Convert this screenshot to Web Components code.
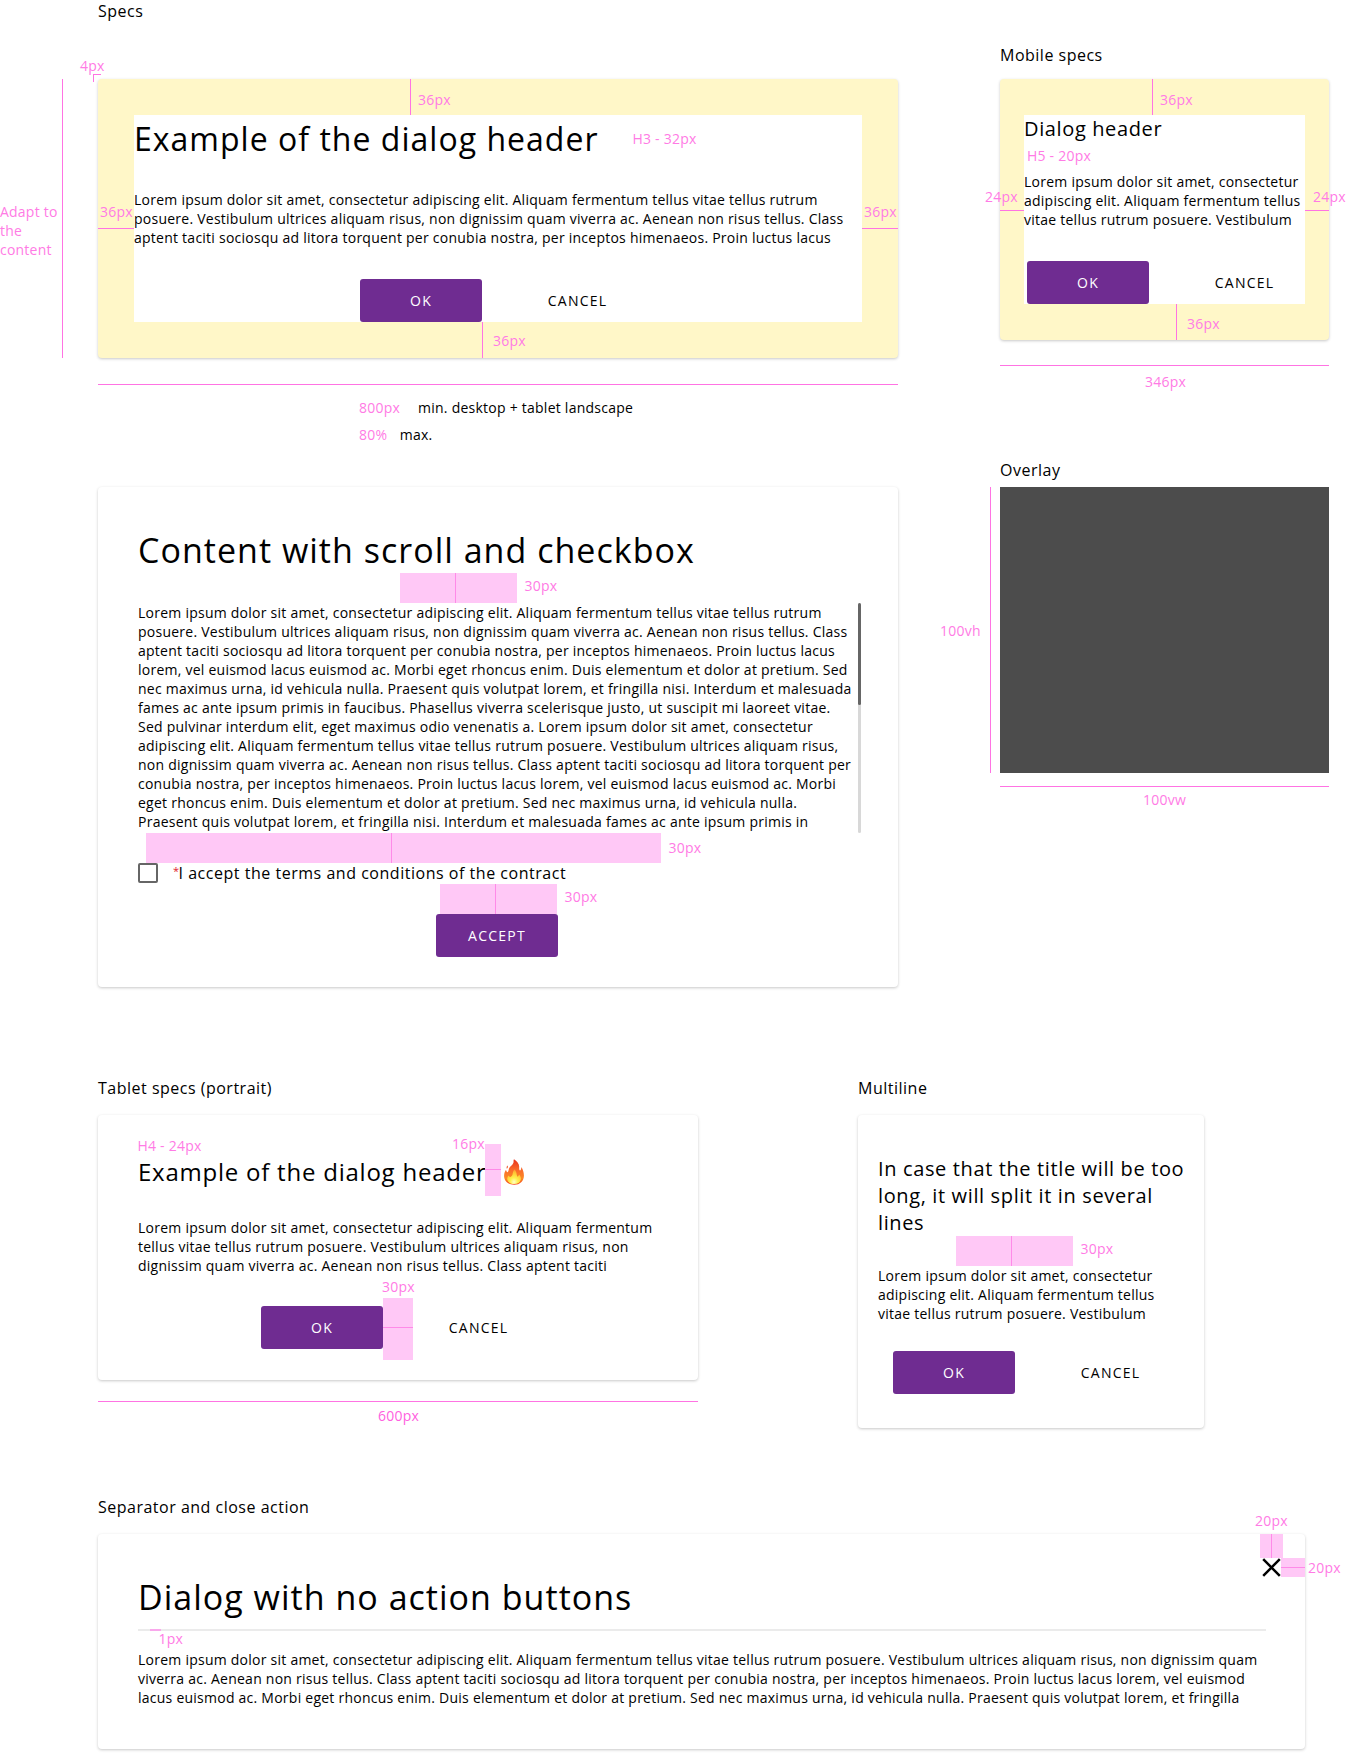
<!DOCTYPE html>
<html lang="en">
<head>
<meta charset="utf-8">
<title>Dialog specs</title>
<style>
html, body { margin: 0; background: #fff; }
body { font-family: "Open Sans", "Noto Sans", sans-serif; color: #000; }
</style>
</head>
<body>
<dialog-specs></dialog-specs>

<template id="t-section">
<style>
:host { display: block; }
h2 { margin: 0 0 var(--title-gap, 16px); font: 400 16px/22px "Open Sans", sans-serif; letter-spacing: .5px; white-space: nowrap; }
</style>
<h2></h2><slot></slot>
</template>

<template id="t-card">
<style>
:host { display: flex; flex-direction: column; position: relative; box-sizing: border-box; background: #fff; border-radius: 4px; box-shadow: 0 1px 3px rgba(0,0,0,.22); }
:host([padded]) { padding: 36px var(--side, 36px); background: #fff7c8; }
:host([padded]) .body { background: #fff; }
.body { display: flex; flex-direction: column; }
</style>
<div class="body"><slot></slot></div><slot name="notes"></slot>
</template>

<template id="t-button">
<style>
:host { display: flex; align-items: center; justify-content: center; box-sizing: border-box; width: 122px; height: 43px; border-radius: 3px; font: 14px/19px "Open Sans", sans-serif; letter-spacing: 1.23px; }
:host([primary]) { background: #6f2c91; color: #fff; }
:host(:not([primary])) { padding-left: 9px; }
</style>
<span><slot></slot></span>
</template>

<template id="t-title">
<style>
:host { display: block; white-space: nowrap; font-size: 32px; line-height: 47px; letter-spacing: 1.02px; }
:host([size="34"]) { font-size: 34px; line-height: 46px; }
:host([size="24"]) { font-size: 24px; line-height: 33px; letter-spacing: .77px; }
:host([size="20"]) { font-size: 20px; line-height: 27px; letter-spacing: .63px; }
</style>
<slot></slot>
</template>

<template id="t-copy">
<style>:host { display: block; white-space: nowrap; font-size: 14px; line-height: 19px; letter-spacing: .245px; }</style>
<slot></slot>
</template>

<template id="t-note">
<style>
:host { display: block; white-space: nowrap; font-size: 14px; line-height: 19px; letter-spacing: .22px; color: #ff7be5; }
:host([over]) { position: absolute; }
</style>
<slot></slot>
</template>

<template id="t-line">
<style>
:host { display: block; background: #ff73e3; width: 1px; height: 1px; }
:host([over]) { position: absolute; }
</style>
</template>

<template id="t-gap">
<style>
:host { display: flex; height: 30px; column-gap: 7.5px; }
.band { width: var(--w, 117px); background: #ffc8f6; display: flex; }
.band i { width: 1px; margin-left: var(--tick, 55px); background: #ff8ae8; }
spec-note { margin-top: var(--drop, 3px); }
</style>
<div class="band"><i></i></div><spec-note><slot></slot></spec-note>
</template>

<template id="t-band">
<style>
:host { position: absolute; display: flex; align-items: center; justify-content: center; background: #ffc8f6; }
i { background: #ff8ae8; width: 1px; height: 100%; }
:host([across]) i { width: 100%; height: 1px; }
</style>
<i></i>
</template>

<template id="t-scroll">
<style>
:host { display: flex; height: 230px; overflow: hidden; }
.text { width: 720px; }
.track { width: 3px; border-radius: 2px; background: #d8d8d8; }
.thumb { height: 102px; border-radius: 2px; background: #666; }
</style>
<div class="text"><slot></slot></div><div class="track"><div class="thumb"></div></div>
</template>

<template id="t-check">
<style>
:host { display: flex; height: 21px; font-size: 16px; line-height: 22px; letter-spacing: .525px; white-space: nowrap; }
.box { box-sizing: border-box; width: 20px; height: 20px; margin: 0 15px 0 0; border: 2px solid #666; border-radius: 2px; }
sup { color: #e0202c; font-size: 11px; line-height: 15px; width: 5.500px; letter-spacing: 0; vertical-align: baseline; }
.label { margin-top: -1px; }
</style>
<div class="box"></div><sup>*</sup><span class="label"><slot></slot></span>
</template>

<template id="t-fire">
<style>:host { display: block; width: 20px; height: 26px; } svg { display: block; }</style>
<svg width="20" height="26" viewBox="0 0 20 26">
<defs>
<linearGradient id="a" x1="0" y1="0" x2="0" y2="1"><stop offset="0" stop-color="#e8301c"/><stop offset=".4" stop-color="#f9692a"/><stop offset=".75" stop-color="#fb8a24"/><stop offset="1" stop-color="#f5401c"/></linearGradient>
<radialGradient id="b" cx=".5" cy=".85" r=".8"><stop offset="0" stop-color="#ffffc8"/><stop offset=".35" stop-color="#fff04e"/><stop offset=".75" stop-color="#ffc936"/><stop offset="1" stop-color="#fda331"/></radialGradient>
</defs>
<path fill="url(#a)" d="M10 .3C13 2 15.5 5 15.2 8.200C15.100 9.500 15.200 11 15.900 11.600C17 11 17.400 9.400 17.200 8C19 10.500 20 13.500 19.900 17C19.800 22 16 25.800 10.200 25.800C4.200 25.800 .2 22 .1 17.300C0 14.300 1 12.500 2 10.800C2.200 12 2.700 13 3.600 13.300C4.600 12.500 4.500 11.200 5 9.500C5.600 7.500 9 6 9.500 3.500C9.700 2.300 9.300 1.200 10 .3Z"/>
<path fill="#ed5424" d="M3.500 6.500C4.200 7.600 3.900 8.900 2.900 9.800C2.300 8.700 2.600 7.500 3.500 6.500Z"/>
<path fill="url(#b)" d="M10.500 10.500C12.600 12.300 12.500 15.200 13.200 17.500C14.200 17.500 14.800 16.400 15 15.400C16.500 17 17.200 18.700 16.800 20.800C16.200 23.600 13.700 25.100 10.300 25.100C6.500 25.100 3.500 23.200 3.200 20.300C3.100 18.500 3.800 17.200 4.500 16.400C5 17.300 5.600 17.900 6.500 17.900C8 17.300 8.600 15.700 8.700 14.500C8.900 13 9.500 11.500 10.500 10.500Z"/>
</svg>
</template>

<template id="t-close">
<style>:host { display: block; position: absolute; width: 19px; height: 19px; } svg { display: block; }</style>
<svg width="19" height="19" viewBox="0 0 19 19"><path d="M1.200 1.200 17.800 17.800M17.800 1.200 1.200 17.800" fill="none" stroke="#000" stroke-width="2.500"/></svg>
</template>

<template id="t-page">
<style>
:host { display: flex; flex-direction: column; box-sizing: border-box; width: 1346px; height: 1755px; padding-left: 98px; overflow: hidden; }
.row { display: flex; align-items: flex-start; }
.top { height: 987px; }
.left { width: 800px; margin-right: 102px; }
.right { width: 329px; padding-top: 44px; }
.second { height: 351px; margin: 90px 0 68px; }
.actions { display: flex; gap: 30px; }
.pair { display: flex; }
.overlay { position: relative; height: 286px; background: #4c4c4c; }
.rule { width: 1128px; height: 2px; background: #ebebeb; }
</style>
<div class="row top">
  <div class="left">
    <spec-section heading="Specs" style="--title-gap:57px">
      <spec-card padded style="height:279px">
        <spec-title>Example of the dialog header</spec-title>
        <spec-copy style="margin-top:28px">Lorem ipsum dolor sit amet, consectetur adipiscing elit. Aliquam fermentum tellus vitae tellus rutrum<br>posuere. Vestibulum ultrices aliquam risus, non dignissim quam viverra ac. Aenean non risus tellus. Class<br>aptent taciti sociosqu ad litora torquent per conubia nostra, per inceptos himenaeos. Proin luctus lacus</spec-copy>
        <div class="actions" style="margin:32px 0 0 226px"><spec-button primary>OK</spec-button><spec-button>CANCEL</spec-button></div>
        <div slot="notes">
          <spec-note over style="left:-98px;top:123px">Adapt to<br>the<br>content</spec-note>
          <spec-line over style="left:-36px;top:0;height:279px"></spec-line>
          <spec-note over style="left:-18px;top:-23px">4px</spec-note>
          <spec-line over style="left:-5px;top:-5px;height:8px"></spec-line>
          <spec-line over style="left:-5px;top:-5px;width:8px"></spec-line>
          <spec-line over style="left:312px;top:0;height:36px"></spec-line>
          <spec-note over style="left:320px;top:11px">36px</spec-note>
          <spec-note over style="left:2px;top:123px">36px</spec-note>
          <spec-line over style="left:0;top:149px;width:36px"></spec-line>
          <spec-note over style="left:766px;top:123px">36px</spec-note>
          <spec-line over style="left:764px;top:149px;width:36px"></spec-line>
          <spec-line over style="left:384px;top:243px;height:36px"></spec-line>
          <spec-note over style="left:395px;top:252px">36px</spec-note>
          <spec-note over style="left:534.500px;top:50px">H3 - 32px</spec-note>
        </div>
      </spec-card>
      <spec-line style="width:800px;margin-top:26px"></spec-line>
      <div class="pair" style="padding:13px 0 0 261px;gap:18px"><spec-note>800px</spec-note><spec-copy>min. desktop + tablet landscape</spec-copy></div>
      <div class="pair" style="padding:8px 0 0 261px;gap:12.500px"><spec-note>80%</spec-note><spec-copy>max.</spec-copy></div>
    </spec-section>
    <spec-card style="height:500px;margin-top:43px;padding:40px 37px 0 40px">
      <spec-title size="34">Content with scroll and checkbox</spec-title>
      <spec-gap style="margin-left:262px">30px</spec-gap>
      <spec-scroll><spec-copy>Lorem ipsum dolor sit amet, consectetur adipiscing elit. Aliquam fermentum tellus vitae tellus rutrum<br>posuere. Vestibulum ultrices aliquam risus, non dignissim quam viverra ac. Aenean non risus tellus. Class<br>aptent taciti sociosqu ad litora torquent per conubia nostra, per inceptos himenaeos. Proin luctus lacus<br>lorem, vel euismod lacus euismod ac. Morbi eget rhoncus enim. Duis elementum et dolor at pretium. Sed<br>nec maximus urna, id vehicula nulla. Praesent quis volutpat lorem, et fringilla nisi. Interdum et malesuada<br>fames ac ante ipsum primis in faucibus. Phasellus viverra scelerisque justo, ut suscipit mi laoreet vitae.<br>Sed pulvinar interdum elit, eget maximus odio venenatis a. Lorem ipsum dolor sit amet, consectetur<br>adipiscing elit. Aliquam fermentum tellus vitae tellus rutrum posuere. Vestibulum ultrices aliquam risus,<br>non dignissim quam viverra ac. Aenean non risus tellus. Class aptent taciti sociosqu ad litora torquent per<br>conubia nostra, per inceptos himenaeos. Proin luctus lacus lorem, vel euismod lacus euismod ac. Morbi<br>eget rhoncus enim. Duis elementum et dolor at pretium. Sed nec maximus urna, id vehicula nulla.<br>Praesent quis volutpat lorem, et fringilla nisi. Interdum et malesuada fames ac ante ipsum primis in</spec-copy></spec-scroll>
      <spec-gap style="margin-left:8px;--w:515px;--tick:245px;--drop:5px">30px</spec-gap>
      <spec-checkbox>I accept the terms and conditions of the contract</spec-checkbox>
      <spec-gap style="margin-left:302px">30px</spec-gap>
      <spec-button primary style="margin-left:298px">ACCEPT</spec-button>
    </spec-card>
  </div>
  <div class="right">
    <spec-section heading="Mobile specs" style="--title-gap:13px">
      <spec-card padded style="height:261px;--side:24px">
        <spec-title size="20">Dialog header</spec-title>
        <spec-copy style="margin-top:30px">Lorem ipsum dolor sit amet, consectetur<br>adipiscing elit. Aliquam fermentum tellus<br>vitae tellus rutrum posuere. Vestibulum</spec-copy>
        <div class="actions" style="margin:32px 0 0 3px"><spec-button primary>OK</spec-button><spec-button>CANCEL</spec-button></div>
        <div slot="notes">
          <spec-note over style="left:27px;top:67px">H5 - 20px</spec-note>
          <spec-line over style="left:152px;top:0;height:36px"></spec-line>
          <spec-note over style="left:160px;top:11px">36px</spec-note>
          <spec-note over style="left:-15px;top:108px">24px</spec-note>
          <spec-line over style="left:0;top:131px;width:24px"></spec-line>
          <spec-note over style="left:313px;top:108px">24px</spec-note>
          <spec-line over style="left:305px;top:131px;width:24px"></spec-line>
          <spec-line over style="left:176px;top:225px;height:36px"></spec-line>
          <spec-note over style="left:187px;top:235px">36px</spec-note>
        </div>
      </spec-card>
      <spec-line style="width:329px;margin-top:25px"></spec-line>
      <spec-note style="padding:6px 0 0 145px">346px</spec-note>
    </spec-section>
    <spec-section heading="Overlay" style="--title-gap:6px;margin-top:68px">
      <div class="overlay">
        <spec-line over style="left:-10px;top:0;height:286px"></spec-line>
        <spec-note over style="left:-60px;top:134px">100vh</spec-note>
      </div>
      <spec-line style="width:329px;margin-top:13px"></spec-line>
      <spec-note style="padding:3px 0 0 143px">100vw</spec-note>
    </spec-section>
  </div>
</div>
<div class="row second">
  <spec-section heading="Tablet specs (portrait)" style="width:600px;margin-right:160px">
    <spec-card style="height:265px;padding:40px 40px 0">
      <div class="pair" style="gap:17.500px;height:33px"><spec-title size="24">Example of the dialog header</spec-title><spec-fire style="margin-top:4px"></spec-fire></div>
      <spec-copy style="margin-top:30px">Lorem ipsum dolor sit amet, consectetur adipiscing elit. Aliquam fermentum<br>tellus vitae tellus rutrum posuere. Vestibulum ultrices aliquam risus, non<br>dignissim quam viverra ac. Aenean non risus tellus. Class aptent taciti</spec-copy>
      <div class="actions" style="margin:31px 0 0 123px"><spec-button primary>OK</spec-button><spec-button>CANCEL</spec-button></div>
      <div slot="notes">
        <spec-note over style="left:39.500px;top:21px">H4 - 24px</spec-note>
        <spec-note over style="left:354px;top:19px">16px</spec-note>
        <spec-band over across style="left:387px;top:29px;width:16px;height:52px;box-sizing:border-box;padding-bottom:2px"></spec-band>
        <spec-note over style="left:284px;top:162px">30px</spec-note>
        <spec-band over across style="left:285px;top:183px;width:30px;height:62px;box-sizing:border-box;padding-bottom:3px"></spec-band>
      </div>
    </spec-card>
    <spec-line style="width:600px;margin-top:21px"></spec-line>
    <spec-note style="padding:4px 0 0 280px;color:#ff5fe0">600px</spec-note>
  </spec-section>
  <spec-section heading="Multiline" style="width:346px">
    <spec-card style="height:313px;padding:40px 20px 0">
      <spec-title size="20">In case that the title will be too<br>long, it will split it in several<br>lines</spec-title>
      <spec-gap style="margin-left:78px">30px</spec-gap>
      <spec-copy>Lorem ipsum dolor sit amet, consectetur<br>adipiscing elit. Aliquam fermentum tellus<br>vitae tellus rutrum posuere. Vestibulum</spec-copy>
      <div class="actions" style="margin:28px 0 0 15px"><spec-button primary>OK</spec-button><spec-button>CANCEL</spec-button></div>
    </spec-card>
  </spec-section>
</div>
<spec-section heading="Separator and close action" style="width:1207px">
  <spec-card style="height:215px;padding:40px 39px 0 40px">
    <spec-title size="34">Dialog with no action buttons</spec-title>
    <div class="rule" style="margin:9px 0 19px"></div>
    <spec-copy>Lorem ipsum dolor sit amet, consectetur adipiscing elit. Aliquam fermentum tellus vitae tellus rutrum posuere. Vestibulum ultrices aliquam risus, non dignissim quam<br>viverra ac. Aenean non risus tellus. Class aptent taciti sociosqu ad litora torquent per conubia nostra, per inceptos himenaeos. Proin luctus lacus lorem, vel euismod<br>lacus euismod ac. Morbi eget rhoncus enim. Duis elementum et dolor at pretium. Sed nec maximus urna, id vehicula nulla. Praesent quis volutpat lorem, et fringilla</spec-copy>
    <div slot="notes">
      <spec-line over style="left:52px;top:95px;width:11px;height:2px;background:#f9a8ec"></spec-line>
      <spec-note over style="left:60.500px;top:95px">1px</spec-note>
      <spec-note over style="left:1157px;top:-23px">20px</spec-note>
      <spec-band over style="left:1162px;top:0;width:23px;height:24px"></spec-band>
      <spec-band over across style="left:1183px;top:24px;width:24px;height:19px"></spec-band>
      <spec-close style="left:1164px;top:24px"></spec-close>
      <spec-note over style="left:1210px;top:24px">20px</spec-note>
    </div>
  </spec-card>
</spec-section>
</template>

<script>
const define = (tag, templateId, setup) => customElements.define(tag, class extends HTMLElement {
  constructor() {
    super();
    this.attachShadow({ mode: 'open' }).append(document.getElementById(templateId).content.cloneNode(true));
  }
  connectedCallback() { if (setup) setup(this); }
});
define('spec-section', 't-section', el => { el.shadowRoot.querySelector('h2').textContent = el.getAttribute('heading'); });
define('spec-card', 't-card');
define('spec-button', 't-button');
define('spec-title', 't-title');
define('spec-copy', 't-copy');
define('spec-note', 't-note');
define('spec-line', 't-line');
define('spec-gap', 't-gap');
define('spec-band', 't-band');
define('spec-scroll', 't-scroll');
define('spec-checkbox', 't-check');
define('spec-fire', 't-fire');
define('spec-close', 't-close');
define('dialog-specs', 't-page');
</script>
</body>
</html>
